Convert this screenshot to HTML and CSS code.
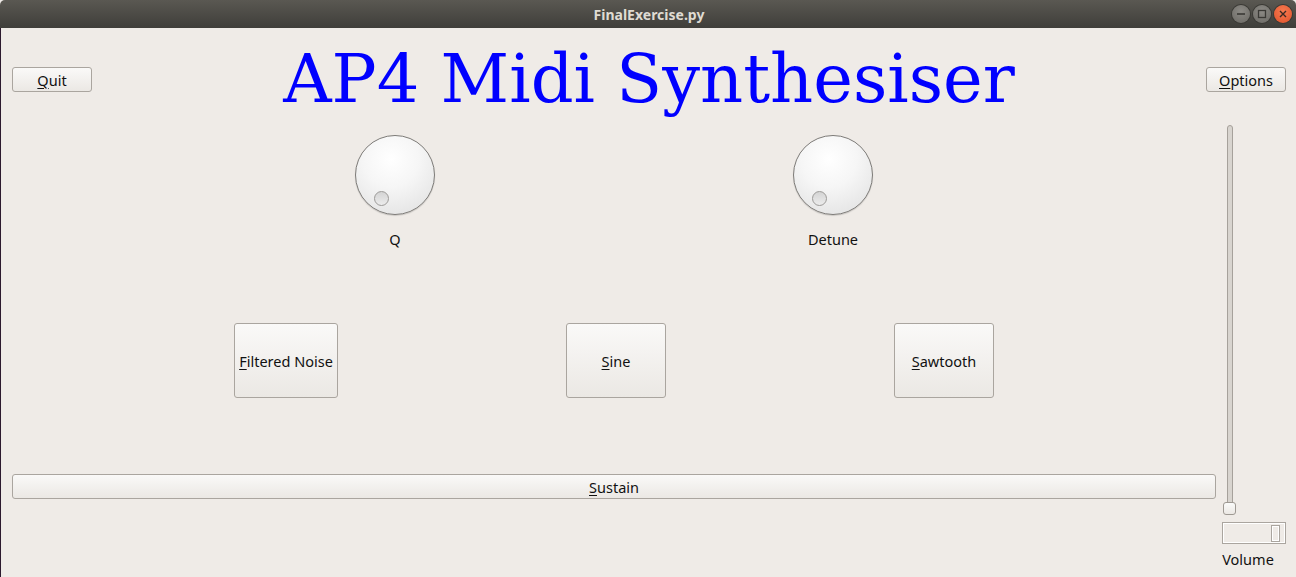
FILE: index.html
```html
<!DOCTYPE html>
<html>
<head>
<meta charset="utf-8">
<link rel="stylesheet" href="styles.css">
</head>
<body>
<div class="screen">
  <div class="titlebar">
    <span class="title-text">FinalExercise.py</span>
    <div class="wm-buttons">
      <span class="wm wm-min"><svg width="18" height="18" viewBox="0 0 18 18"><line x1="5" y1="9" x2="13" y2="9" stroke="#3a3935" stroke-width="1.6"/></svg></span>
      <span class="wm wm-max"><svg width="18" height="18" viewBox="0 0 18 18"><rect x="5.5" y="5.5" width="7" height="7" fill="none" stroke="#3a3935" stroke-width="1.3"/></svg></span>
      <span class="wm wm-close"><svg width="18" height="18" viewBox="0 0 18 18"><path d="M6 6 L12 12 M12 6 L6 12" stroke="#3a2a24" stroke-width="1.4"/></svg></span>
    </div>
  </div>
  <div class="window">
    <div class="top-row">
      <button class="btn small-btn"><u>Q</u>uit</button>
      <div class="app-title">AP4 Midi Synthesiser</div>
      <button class="btn small-btn"><u>O</u>ptions</button>
    </div>
    <div class="body-row">
      <div class="main-col">
        <div class="knob-row">
          <div class="knob-box">
            <div class="knob"><span class="knob-dot"></span></div>
            <div class="knob-label">Q</div>
          </div>
          <div class="knob-box">
            <div class="knob"><span class="knob-dot"></span></div>
            <div class="knob-label">Detune</div>
          </div>
        </div>
        <div class="wave-row">
          <button class="btn wave-btn wide"><u>F</u>iltered Noise</button>
          <button class="btn wave-btn"><u>S</u>ine</button>
          <button class="btn wave-btn"><u>S</u>awtooth</button>
        </div>
        <button class="btn sustain-btn"><u>S</u>ustain</button>
      </div>
      <div class="side-col">
        <div class="slider">
          <div class="groove"></div>
          <div class="handle"></div>
        </div>
        <div class="spinbox"><span class="spin-arrows"></span></div>
        <div class="volume-label">Volume</div>
      </div>
    </div>
  </div>
</div>
</body>
</html>
```

FILE: styles.css
```css
html, body {
  margin: 0;
  padding: 0;
  background: #efebe7;
}
.screen {
  width: 1296px;
  height: 577px;
  display: flex;
  flex-direction: column;
  overflow: hidden;
  font-family: "Noto Sans", "Open Sans", sans-serif;
  font-size: 14.5px;
  color: #111;
}
.titlebar {
  height: 28px;
  flex: none;
  background: linear-gradient(#5a5852, #3f3e3a);
  display: flex;
  align-items: center;
  justify-content: center;
  position: relative;
  border-radius: 5px 5px 0 0;
}
.title-text {
  color: #dfdbd2;
  font-weight: bold;
  font-size: 14px;
  font-family: "Noto Sans", sans-serif;
  margin-left: 2px;
}
.wm-buttons {
  position: absolute;
  right: 4px;
  top: 5px;
  display: flex;
  gap: 3px;
}
.wm {
  width: 18px;
  height: 18px;
  border-radius: 50%;
  display: block;
  background: radial-gradient(circle at 50% 35%, #8c8a85, #6a6863);
  box-shadow: 0 0 0 1px #3a3935;
}
.wm svg { display: block; }
.wm-close {
  background: radial-gradient(circle at 50% 35%, #f77a50, #e0512a);
}
.window {
  flex: 1;
  display: flex;
  flex-direction: column;
  border-left: 1px solid #2c1a2e;
  padding: 0 10px 0 11px;
}
.top-row {
  display: grid;
  grid-template-columns: 80px 1fr 80px;
  align-items: start;
  height: 97px;
}
.btn {
  font-family: "Noto Sans", "Open Sans", sans-serif;
  font-size: 14.5px;
  color: #111;
  border: 1px solid #aaa59f;
  border-radius: 3px;
  background: linear-gradient(#faf9f8, #ebe8e4);
  padding: 0;
  margin: 0;
}
.btn u {
  text-decoration-thickness: 1px;
  text-underline-offset: 2px;
}
.small-btn {
  width: 80px;
  height: 25px;
  margin-top: 39px;
}
.app-title {
  font-family: "DejaVu Serif", serif;
  color: #0000ff;
  font-size: 67px;
  line-height: 1;
  text-align: center;
  margin-top: 18px;
}
.body-row {
  flex: 1;
  display: flex;
  gap: 6px;
}
.main-col {
  width: 1204px;
  display: flex;
  flex-direction: column;
}
.knob-row {
  display: flex;
  gap: 358px;
  padding-left: 343px;
  margin-top: 10px;
}
.knob-box {
  width: 80px;
  display: flex;
  flex-direction: column;
  align-items: center;
}
.knob {
  width: 78px;
  height: 78px;
  border-radius: 50%;
  border: 1px solid #7d7b78;
  background: radial-gradient(circle at 45% 30%, #ffffff 0%, #f6f6f6 40%, #dedede 100%);
  box-shadow: 0 1px 1px rgba(0,0,0,0.15);
  position: relative;
}
.knob-dot {
  position: absolute;
  left: 18px;
  top: 55px;
  width: 13px;
  height: 13px;
  border-radius: 50%;
  border: 1px solid #9c9a98;
  background: linear-gradient(#d4d4d4, #ececec);
}
.knob-label {
  margin-top: 14px;
  line-height: 20px;
}
.wave-row {
  display: flex;
  gap: 228px;
  padding-left: 222px;
  margin-top: 74px;
}
.wave-btn {
  width: 100px;
  height: 75px;
}
.wave-btn.wide {
  width: 104px;
}
.sustain-btn {
  width: 1204px;
  height: 25px;
  margin-top: 76px;
}
.side-col {
  width: 64px;
  display: flex;
  flex-direction: column;
}
.slider {
  position: relative;
  height: 390px;
  width: 16px;
}
.groove {
  position: absolute;
  left: 5px;
  top: 0;
  bottom: 6px;
  width: 4px;
  border: 1px solid #a6a19b;
  border-radius: 3px;
  background: #d8d4cf;
}
.handle {
  position: absolute;
  left: 1px;
  top: 377px;
  width: 11px;
  height: 11px;
  border: 1px solid #9e9993;
  border-radius: 3px;
  background: linear-gradient(#fbfbfa, #ebe8e4);
}
.spinbox {
  margin-top: 7px;
  height: 20px;
  width: 62px;
  border: 1px solid #aaa59f;
  box-shadow: inset 0 0 0 1px #fff;
  position: relative;
}
.spin-arrows {
  position: absolute;
  right: 5px;
  top: 2px;
  width: 7px;
  height: 15px;
  border: 1px solid #aaa59f;
  box-shadow: inset 0 0 0 1px #fff;
}
.volume-label {
  margin-top: 5px;
  line-height: 20px;
  text-align: center;
  width: 52px;
}
```
